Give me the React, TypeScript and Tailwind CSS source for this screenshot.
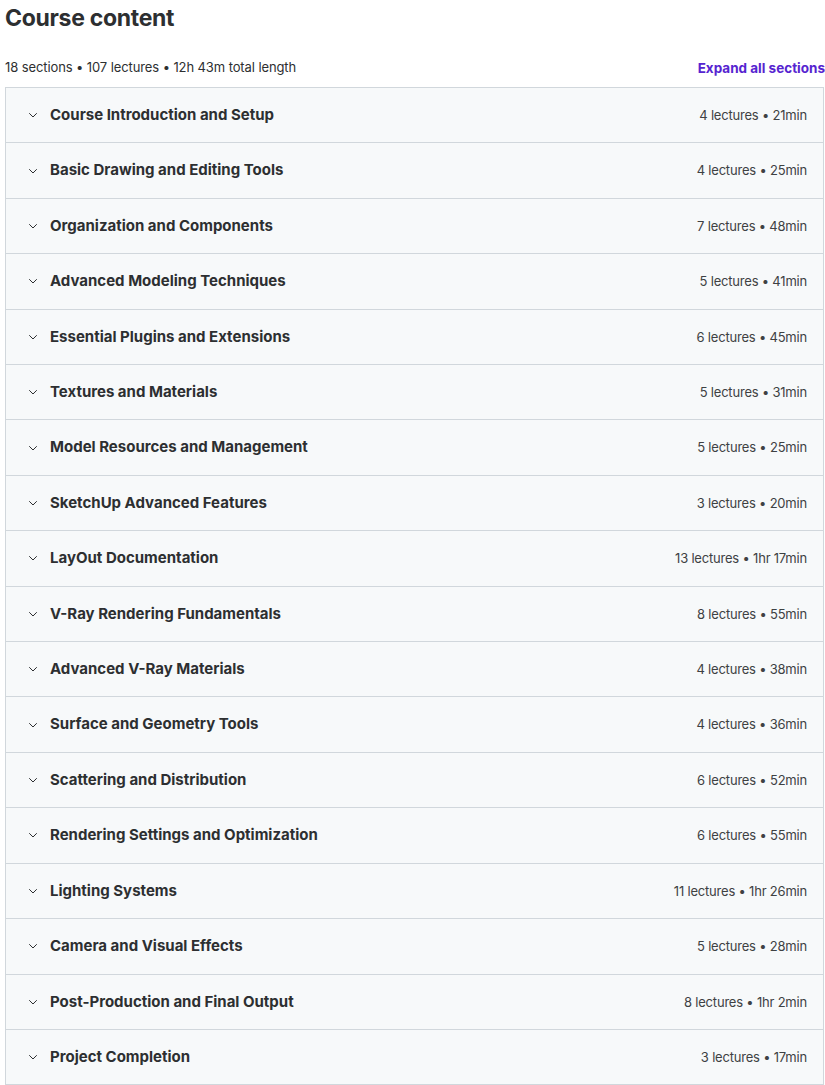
import React from "react";

const sections: [string, string][] = [
  ["Course Introduction and Setup", "4 lectures • 21min"],
  ["Basic Drawing and Editing Tools", "4 lectures • 25min"],
  ["Organization and Components", "7 lectures • 48min"],
  ["Advanced Modeling Techniques", "5 lectures • 41min"],
  ["Essential Plugins and Extensions", "6 lectures • 45min"],
  ["Textures and Materials", "5 lectures • 31min"],
  ["Model Resources and Management", "5 lectures • 25min"],
  ["SketchUp Advanced Features", "3 lectures • 20min"],
  ["LayOut Documentation", "13 lectures • 1hr 17min"],
  ["V-Ray Rendering Fundamentals", "8 lectures • 55min"],
  ["Advanced V-Ray Materials", "4 lectures • 38min"],
  ["Surface and Geometry Tools", "4 lectures • 36min"],
  ["Scattering and Distribution", "6 lectures • 52min"],
  ["Rendering Settings and Optimization", "6 lectures • 55min"],
  ["Lighting Systems", "11 lectures • 1hr 26min"],
  ["Camera and Visual Effects", "5 lectures • 28min"],
  ["Post-Production and Final Output", "8 lectures • 1hr 2min"],
  ["Project Completion", "3 lectures • 17min"],
];

function Chevron() {
  return (
    <svg width="12" height="12" viewBox="0 0 24 24" fill="none" stroke="currentColor" strokeWidth="2" strokeLinecap="round" strokeLinejoin="round">
      <path d="M5 9l7 7 7-7" />
    </svg>
  );
}

export default function App() {
  return (
    <div className="w-[825px] bg-white text-[#2d2f31] font-['Inter','Liberation_Sans',sans-serif]">
      <h2 className="pl-[5px] text-[23px] leading-[36px] font-bold tracking-[-0.3px]">Course content</h2>
      <div className="flex items-center justify-between pl-[5px] mt-[22px] h-[20px]">
        <span className="text-[13px] tracking-[-0.1px]">18 sections • 107 lectures • 12h 43m total length</span>
        <button className="text-[13.5px] font-bold text-[#5624d0]">Expand all sections</button>
      </div>
      <div className="ml-[5px] mr-[1px] mt-[9px] border border-[#d1d7dc]">
        {sections.map(([title, meta], i) => (
          <div
            key={title}
            className={`flex items-center justify-between bg-[#f7f9fa] pl-[21px] pr-[16px] py-[16px] ${i > 0 ? "border-t border-[#d1d7dc]" : ""}`}
          >
            <div className="flex items-center gap-[11px]">
              <span className="text-[#2d2f31]"><Chevron /></span>
              <span className="text-[15px] leading-[22.4px] font-bold">{title}</span>
            </div>
            <span className="text-[13px] leading-[22.4px] tracking-[-0.2px] text-[#3e4143]">{meta}</span>
          </div>
        ))}
      </div>
    </div>
  );
}
